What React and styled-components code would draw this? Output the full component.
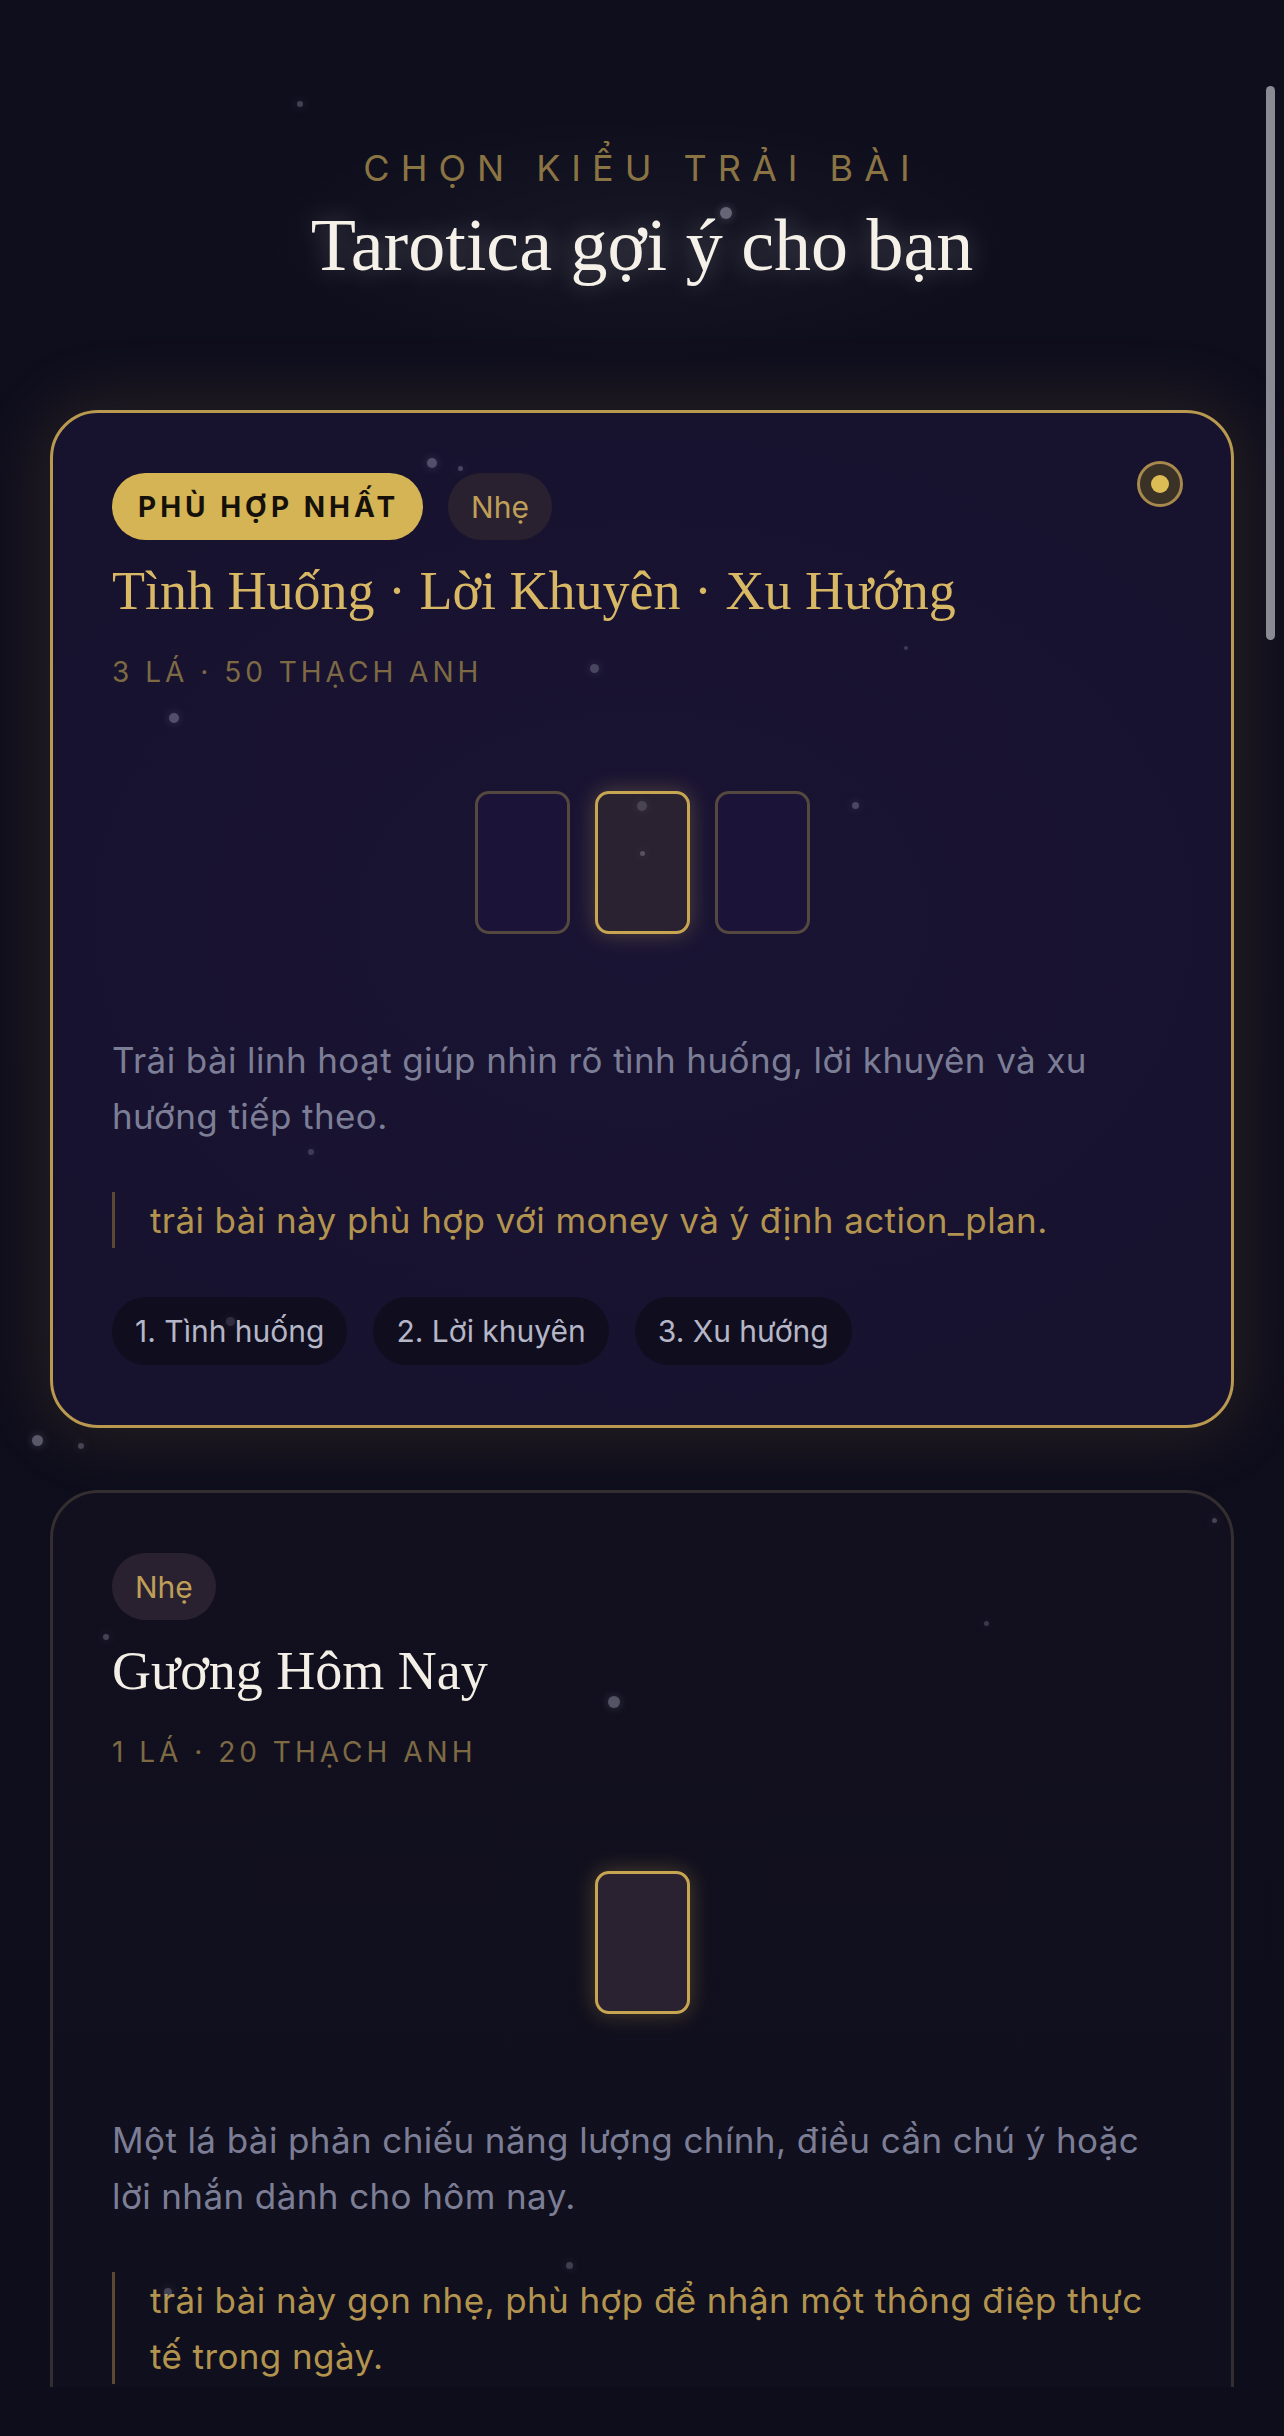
import React from 'react';
import styled, { createGlobalStyle } from 'styled-components';

const GlobalStyle = createGlobalStyle`
  html, body {
    margin: 0;
    padding: 0;
    background: #0e0d1b;
  }
  body {
    font-family: Inter, 'Noto Sans', sans-serif;
  }
  * {
    box-sizing: border-box;
  }
`;

const Screen = styled.div`
  width: 1284px;
  height: 2436px;
  display: flex;
  flex-direction: column;
  background: #0e0d1b;
  overflow: hidden;
`;

const Viewport = styled.div`
  position: relative;
  flex: none;
  height: 2387px;
  overflow: hidden;
  background:
    radial-gradient(ellipse 560px 180px at 642px 240px, rgba(255, 255, 255, 0.035), transparent 70%),
    linear-gradient(180deg, #0f0e1d 0%, #0e0d1b 100%);
`;

const Content = styled.div`
  display: flex;
  flex-direction: column;
  padding: 143px 50px 0;
`;

const Header = styled.header`
  display: flex;
  flex-direction: column;
  align-items: center;
  margin-bottom: 124px;
`;

const Eyebrow = styled.div`
  font-size: 36px;
  line-height: 50px;
  letter-spacing: 11px;
  color: #8a7443;
  text-transform: uppercase;
`;

const Heading = styled.h1`
  margin: 11px 0 0;
  font-family: 'Liberation Serif', 'DejaVu Serif', serif;
  font-weight: 400;
  font-size: 74px;
  line-height: 82px;
  color: #f5f1e8;
  text-shadow: 0 0 26px rgba(255, 255, 255, 0.28);
`;

const CardList = styled.div`
  display: flex;
  flex-direction: column;
  gap: 62px;
`;

const Card = styled.section`
  position: relative;
  padding: 60px 59px;
  border-radius: 48px;
  border: 3px solid ${(p) => (p.$selected ? '#b8994f' : '#352e30')};
  background: ${(p) =>
    p.$selected
      ? 'radial-gradient(ellipse 700px 500px at 50% 50%, #1a1434 0%, #17122e 100%)'
      : 'linear-gradient(180deg, #12101f 0%, #100f1d 100%)'};
  box-shadow: ${(p) =>
    p.$selected ? '0 0 70px 8px rgba(201, 160, 80, 0.13)' : 'none'};
`;

const Radio = styled.div`
  position: absolute;
  top: 48px;
  right: 48px;
  width: 46px;
  height: 46px;
  border-radius: 50%;
  border: 3px solid #a8894c;
  background: #3a3127;
  display: flex;
  align-items: center;
  justify-content: center;

  &::after {
    content: '';
    width: 18px;
    height: 18px;
    border-radius: 50%;
    background: #dcbc55;
  }
`;

const Tags = styled.div`
  display: flex;
  gap: 25px;
`;

const Pill = styled.span`
  display: inline-flex;
  align-items: center;
  height: 67px;
  border-radius: 34px;
  padding: ${(p) => (p.$best ? '0 24px 0 26px' : '0 23px')};
  background: ${(p) => (p.$best ? '#d4b455' : '#2a2130')};
  color: ${(p) => (p.$best ? '#15110a' : '#bf9f58')};
  font-size: ${(p) => (p.$best ? '28px' : '30px')};
  font-weight: ${(p) => (p.$best ? 700 : 400)};
  letter-spacing: ${(p) => (p.$best ? '4px' : '0')};
`;

const Title = styled.h2`
  margin: 19px 0 0;
  font-family: 'Liberation Serif', 'DejaVu Serif', serif;
  font-weight: 400;
  font-size: 54px;
  line-height: 65px;
  color: ${(p) => (p.$selected ? '#d8b864' : '#f3efe6')};
`;

const Meta = styled.div`
  margin-top: 27px;
  font-size: 28px;
  line-height: 42px;
  letter-spacing: 4px;
  color: #7d6a44;
  text-transform: uppercase;
`;

const Spread = styled.div`
  display: flex;
  justify-content: center;
  gap: 25px;
  padding: 98px 0;
`;

const SpreadCard = styled.div`
  width: 95px;
  height: 143px;
  border-radius: 14px;
  border: 3px solid ${(p) => (p.$lit ? '#c8a651' : '#54483f')};
  background: ${(p) => (p.$lit ? '#2a2230' : '#1b1338')};
  box-shadow: ${(p) => (p.$lit ? '0 0 22px rgba(212, 180, 85, 0.3)' : 'none')};
`;

const Description = styled.p`
  margin: 0;
  font-size: 35px;
  line-height: 56px;
  letter-spacing: 0.4px;
  color: #7c7e96;
`;

const Quote = styled.blockquote`
  margin: 48px 0 0;
  padding-left: 35px;
  border-left: 3px solid #5a4a33;
  font-size: 35px;
  line-height: 56px;
  letter-spacing: 0.4px;
  color: #b3944f;
`;

const Steps = styled.div`
  display: flex;
  gap: 26px;
  margin-top: 49px;
`;

const Step = styled.span`
  display: inline-flex;
  align-items: center;
  height: 68px;
  padding: 0 23px;
  border-radius: 34px;
  background: #100e1e;
  color: #b5b6c7;
  font-size: 30px;
`;

const Stars = styled.div`
  position: absolute;
  inset: 0;
  pointer-events: none;
`;

const Star = styled.span`
  position: absolute;
  border-radius: 50%;
  background: rgba(205, 205, 230, 0.55);
  box-shadow: 0 0 10px rgba(205, 205, 230, 0.35);
`;

const ScrollThumb = styled.div`
  position: absolute;
  top: 86px;
  right: 9px;
  width: 9px;
  height: 554px;
  border-radius: 5px;
  background: #8a8a94;
`;

const BottomBar = styled.div`
  flex: 1;
  background: #0e0d1b;
`;

const stars = [
  [300, 104, 6, 0.5],
  [726, 213, 12, 0.8],
  [432, 463, 10, 0.6],
  [460, 468, 5, 0.5],
  [594, 668, 9, 0.5],
  [906, 648, 4, 0.4],
  [174, 718, 10, 0.6],
  [855, 805, 7, 0.5],
  [642, 806, 10, 0.35],
  [642, 853, 5, 0.5],
  [311, 1152, 6, 0.4],
  [230, 1321, 9, 0.3],
  [37, 1440, 11, 0.7],
  [81, 1446, 6, 0.5],
  [1214, 1520, 5, 0.5],
  [106, 1637, 6, 0.5],
  [986, 1623, 5, 0.4],
  [614, 1702, 12, 0.65],
  [569, 2265, 7, 0.45],
  [168, 2292, 8, 0.5],
];

const spreads = [
  {
    title: 'Tình Huống · Lời Khuyên · Xu Hướng',
    meta: '3 lá · 50 thạch anh',
    level: 'Nhẹ',
    best: true,
    cards: 3,
    description: 'Trải bài linh hoạt giúp nhìn rõ tình huống, lời khuyên và xu hướng tiếp theo.',
    quote: 'trải bài này phù hợp với money và ý định action_plan.',
    steps: ['1. Tình huống', '2. Lời khuyên', '3. Xu hướng'],
  },
  {
    title: 'Gương Hôm Nay',
    meta: '1 lá · 20 thạch anh',
    level: 'Nhẹ',
    best: false,
    cards: 1,
    description:
      'Một lá bài phản chiếu năng lượng chính, điều cần chú ý hoặc lời nhắn dành cho hôm nay.',
    quote: 'trải bài này gọn nhẹ, phù hợp để nhận một thông điệp thực tế trong ngày.',
    steps: [],
  },
];

const SpreadOption = ({ spread }) => {
  const lit = Math.floor(spread.cards / 2);
  return (
    <Card $selected={spread.best}>
      {spread.best && <Radio />}
      <Tags>
        {spread.best && <Pill $best>PHÙ HỢP NHẤT</Pill>}
        <Pill>{spread.level}</Pill>
      </Tags>
      <Title $selected={spread.best}>{spread.title}</Title>
      <Meta>{spread.meta}</Meta>
      <Spread>
        {Array.from({ length: spread.cards }).map((_, i) => (
          <SpreadCard key={i} $lit={i === lit} />
        ))}
      </Spread>
      <Description>{spread.description}</Description>
      <Quote>{spread.quote}</Quote>
      {spread.steps.length > 0 && (
        <Steps>
          {spread.steps.map((s) => (
            <Step key={s}>{s}</Step>
          ))}
        </Steps>
      )}
    </Card>
  );
};

const App = () => {
  return (
    <Screen>
      <GlobalStyle />
      <Viewport>
        <Content>
          <Header>
            <Eyebrow>Chọn kiểu trải bài</Eyebrow>
            <Heading>Tarotica gợi ý cho bạn</Heading>
          </Header>
          <CardList>
            {spreads.map((s) => (
              <SpreadOption key={s.title} spread={s} />
            ))}
          </CardList>
        </Content>
        <Stars>
          {stars.map(([x, y, d, o], i) => (
            <Star
              key={i}
              style={{ left: x - d / 2, top: y - d / 2, width: d, height: d, opacity: o }}
            />
          ))}
        </Stars>
        <ScrollThumb />
      </Viewport>
      <BottomBar />
    </Screen>
  );
};

export default App;
